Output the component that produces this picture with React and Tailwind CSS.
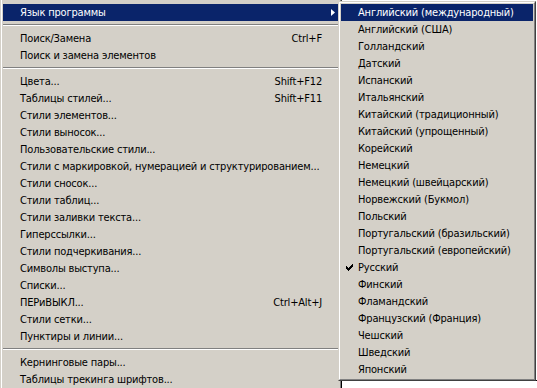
import React from 'react';

const FONT = { fontFamily: '"DejaVu Sans Condensed", "Liberation Sans", Tahoma, sans-serif' };

const mainItems = [
  { t: 'Язык программы', hl: true, arrow: true },
  'sep',
  { t: 'Поиск/Замена', k: 'Ctrl+F' },
  { t: 'Поиск и замена элементов' },
  'sep',
  { t: 'Цвета...', k: 'Shift+F12' },
  { t: 'Таблицы стилей...', k: 'Shift+F11' },
  { t: 'Стили элементов...' },
  { t: 'Стили выносок...' },
  { t: 'Пользовательские стили...' },
  { t: 'Стили с маркировкой, нумерацией и структурированием...' },
  { t: 'Стили сносок...' },
  { t: 'Стили таблиц...' },
  { t: 'Стили заливки текста...' },
  { t: 'Гиперссылки...' },
  { t: 'Стили подчеркивания...' },
  { t: 'Символы выступа...' },
  { t: 'Списки...' },
  { t: 'ПЕРиВЫКЛ...', k: 'Ctrl+Alt+J' },
  { t: 'Стили сетки...' },
  { t: 'Пунктиры и линии...' },
  'sep',
  { t: 'Кернинговые пары...' },
  { t: 'Таблицы трекинга шрифтов...' },
];

const langs = [
  'Английский (международный)',
  'Английский (США)',
  'Голландский',
  'Датский',
  'Испанский',
  'Итальянский',
  'Китайский (традиционный)',
  'Китайский (упрощенный)',
  'Корейский',
  'Немецкий',
  'Немецкий (швейцарский)',
  'Норвежский (Букмол)',
  'Польский',
  'Португальский (бразильский)',
  'Португальский (европейский)',
  'Русский',
  'Финский',
  'Фламандский',
  'Французский (Франция)',
  'Чешский',
  'Шведский',
  'Японский',
];

function Sep() {
  return (
    <div className="h-[9px] flex flex-col pt-[3px]">
      <div className="h-px bg-[#808080]" />
      <div className="h-px bg-white" />
    </div>
  );
}

function Arrow({ color }) {
  return (
    <svg width="4" height="7" viewBox="0 0 4 7" className="block">
      <path d="M0 0 L4 3.5 L0 7 Z" fill={color} />
    </svg>
  );
}

function Check() {
  return (
    <svg width="7" height="7" viewBox="0 0 7 7" className="block" shapeRendering="crispEdges">
      <path d="M0 2h1v3h-1z M1 3h1v3h-1z M2 4h1v3h-1z M3 3h1v3h-1z M4 2h1v3h-1z M5 1h1v3h-1z M6 0h1v3h-1z" fill="#000" />
    </svg>
  );
}

export default function App() {
  return (
    <div className="relative w-[537px] h-[388px] overflow-hidden bg-white text-[11px] tracking-[-0.18px] text-black" style={FONT}>
      {/* Main menu */}
      <div className="w-[342px] h-[388px] bg-[#d4d0c8] flex">
        <div className="w-px shrink-0 bg-[#d4d0c8]" />
        <div className="w-px shrink-0 bg-white" />
        <div className="flex-1 min-w-0 pl-px pr-px pt-[4px] flex flex-col">
          {mainItems.map((it, i) =>
            it === 'sep' ? (
              <Sep key={i} />
            ) : (
              <div
                key={i}
                className={
                  'h-[17px] leading-[17px] flex items-center whitespace-nowrap min-w-0 ' +
                  (it.hl ? 'bg-[#0a246a] text-white' : '')
                }
              >
                <span className="pl-[17px] flex-1 min-w-0">{it.t}</span>
                {it.k && <span className="shrink-0">{it.k}</span>}
                <span className="w-[17px] shrink-0 flex justify-end pr-[4px]">
                  {it.arrow && <Arrow color={it.hl ? '#fff' : '#000'} />}
                </span>
              </div>
            )
          )}
        </div>
        <div className="w-px shrink-0 bg-[#808080]" />
        <div className="w-px shrink-0 bg-[#404040]" />
      </div>

      {/* Background window below submenu */}
      <div className="absolute left-[341px] top-[380px] right-0 bottom-0 bg-white border-l border-t border-black" />

      {/* Submenu */}
      <div className="absolute left-[338px] top-[1px] w-[198px] bg-[#d4d0c8] border-l border-t border-l-[#d4d0c8] border-t-[#d4d0c8] border-r border-b border-r-[#404040] border-b-[#404040]">
        <div className="border-l border-t border-l-white border-t-white border-r border-b border-r-[#808080] border-b-[#808080] p-px">
          {langs.map((l, i) => (
            <div
              key={i}
              className={
                'h-[17px] leading-[17px] flex items-center whitespace-nowrap ' +
                (i === 0 ? 'bg-[#0a246a] text-white' : '')
              }
            >
              <span className="w-[17px] shrink-0 pl-[5px] flex items-center">{l === 'Русский' && <Check />}</span>
              <span>{l}</span>
            </div>
          ))}
        </div>
      </div>
    </div>
  );
}
